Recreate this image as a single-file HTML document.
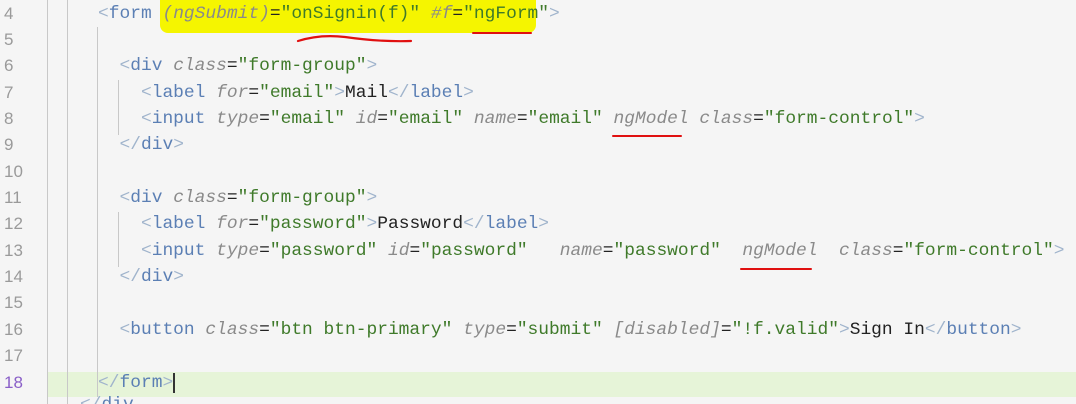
<!DOCTYPE html>
<html style="overflow:hidden;height:404px"><head><style>
html,body{margin:0;padding:0;}
body{width:1076px;height:404px;background:#f5f5f5;overflow:hidden;position:relative;font-family:"Liberation Mono",monospace;font-size:17.9px;}
.ln{position:absolute;left:0;width:40px;color:#9a9a9a;font-family:"Liberation Sans",sans-serif;font-size:17px;padding-left:4px;}
.l{position:absolute;left:98px;white-space:pre;height:26px;line-height:26px;}
.t{color:#5b7fb4}.b{color:#a0b4cc}.a{color:#8a8a8a;font-style:italic}.s{color:#3f7a2a}.x{color:#222}
.g{position:absolute;width:1px;background:#c8c8c8;}
.u{position:absolute;height:2px;background:#e01010;border-radius:2px;}
</style></head><body>
<div style="position:absolute;left:48px;top:372px;width:1028px;height:25px;background:#e6f4d8"></div>
<div style="position:absolute;left:160px;top:0;width:376px;height:33px;background:#f5f500;border-radius:0 0 8px 8px"></div>
<div class="g" style="left:47px;top:0;height:404px"></div>
<div class="g" style="left:67px;top:0;height:404px"></div>
<div class="g" style="left:97px;top:27px;height:370px"></div>
<div class="g" style="left:118px;top:80px;height:55px"></div>
<div class="g" style="left:118px;top:212px;height:55px"></div>
<div class="ln" style="top:1px;line-height:26px">4</div>
<div class="ln" style="top:27px;line-height:26px">5</div>
<div class="ln" style="top:53px;line-height:26px">6</div>
<div class="ln" style="top:80px;line-height:26px">7</div>
<div class="ln" style="top:106px;line-height:26px">8</div>
<div class="ln" style="top:132px;line-height:26px">9</div>
<div class="ln" style="top:159px;line-height:26px">10</div>
<div class="ln" style="top:185px;line-height:26px">11</div>
<div class="ln" style="top:211px;line-height:26px">12</div>
<div class="ln" style="top:238px;line-height:26px">13</div>
<div class="ln" style="top:264px;line-height:26px">14</div>
<div class="ln" style="top:290px;line-height:26px">15</div>
<div class="ln" style="top:317px;line-height:26px">16</div>
<div class="ln" style="top:343px;line-height:26px">17</div>
<div class="ln" style="top:370px;line-height:26px;color:#8a5fc8">18</div>
<div class="l" style="top:1px"><span class="b">&lt;</span><span class="t">form</span> <span class="a">(ngSubmit)</span><span class="x">=</span><span class="s">"onSignin(f)"</span> <span class="a">#f</span><span class="x">=</span><span class="s">"ngForm"</span><span class="b">&gt;</span></div>
<div class="l" style="top:53px">  <span class="b">&lt;</span><span class="t">div</span> <span class="a">class</span><span class="x">=</span><span class="s">"form-group"</span><span class="b">&gt;</span></div>
<div class="l" style="top:80px">    <span class="b">&lt;</span><span class="t">label</span> <span class="a">for</span><span class="x">=</span><span class="s">"email"</span><span class="b">&gt;</span><span class="x">Mail</span><span class="b">&lt;/</span><span class="t">label</span><span class="b">&gt;</span></div>
<div class="l" style="top:106px">    <span class="b">&lt;</span><span class="t">input</span> <span class="a">type</span><span class="x">=</span><span class="s">"email"</span> <span class="a">id</span><span class="x">=</span><span class="s">"email"</span> <span class="a">name</span><span class="x">=</span><span class="s">"email"</span> <span class="a">ngModel</span> <span class="a">class</span><span class="x">=</span><span class="s">"form-control"</span><span class="b">&gt;</span></div>
<div class="l" style="top:132px">  <span class="b">&lt;/</span><span class="t">div</span><span class="b">&gt;</span></div>
<div class="l" style="top:185px">  <span class="b">&lt;</span><span class="t">div</span> <span class="a">class</span><span class="x">=</span><span class="s">"form-group"</span><span class="b">&gt;</span></div>
<div class="l" style="top:211px">    <span class="b">&lt;</span><span class="t">label</span> <span class="a">for</span><span class="x">=</span><span class="s">"password"</span><span class="b">&gt;</span><span class="x">Password</span><span class="b">&lt;/</span><span class="t">label</span><span class="b">&gt;</span></div>
<div class="l" style="top:238px">    <span class="b">&lt;</span><span class="t">input</span> <span class="a">type</span><span class="x">=</span><span class="s">"password"</span> <span class="a">id</span><span class="x">=</span><span class="s">"password"</span>   <span class="a">name</span><span class="x">=</span><span class="s">"password"</span>  <span class="a">ngModel</span>  <span class="a">class</span><span class="x">=</span><span class="s">"form-control"</span><span class="b">&gt;</span></div>
<div class="l" style="top:264px">  <span class="b">&lt;/</span><span class="t">div</span><span class="b">&gt;</span></div>
<div class="l" style="top:317px">  <span class="b">&lt;</span><span class="t">button</span> <span class="a">class</span><span class="x">=</span><span class="s">"btn btn-primary"</span> <span class="a">type</span><span class="x">=</span><span class="s">"submit"</span> <span class="a">[disabled]</span><span class="x">=</span><span class="s">"!f.valid"</span><span class="b">&gt;</span><span class="x">Sign In</span><span class="b">&lt;/</span><span class="t">button</span><span class="b">&gt;</span></div>
<div class="l" style="top:370px"><span class="b">&lt;/</span><span class="t">form</span><span class="b">&gt;</span><span style="border-left:2px solid #333"></span></div>
<div class="l" style="top:392px;left:80px;height:12px;overflow:hidden"><span class="b">&lt;/</span><span class="t">div</span></div>
<svg style="position:absolute;left:0;top:0" width="1076" height="404"><path d="M298 41 Q320 34 345 37 Q380 42 411 41" stroke="#e01010" stroke-width="2.2" fill="none" stroke-linecap="round"/></svg>
<div class="u" style="left:472px;top:32px;width:60px"></div>
<div class="u" style="left:612px;top:135px;width:70px"></div>
<div class="u" style="left:740px;top:268px;width:72px"></div>
</body></html>
